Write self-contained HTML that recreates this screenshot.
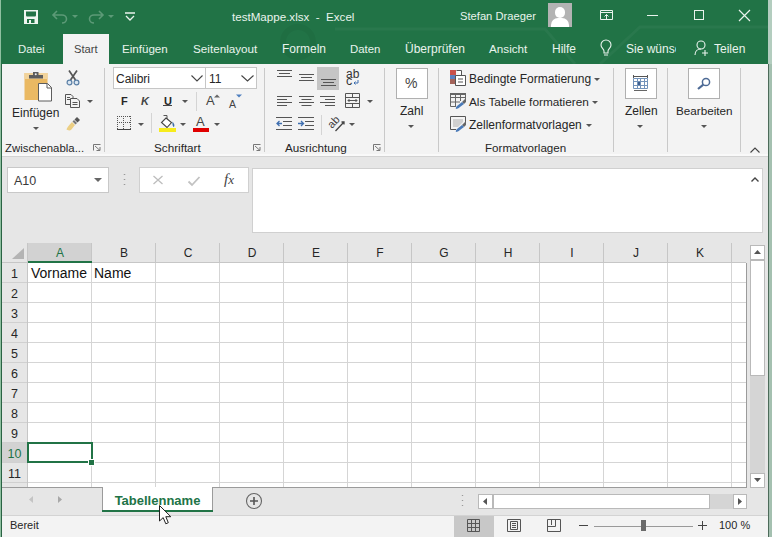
<!DOCTYPE html>
<html><head><meta charset="utf-8">
<style>
*{margin:0;padding:0;box-sizing:border-box}
html,body{width:772px;height:537px;overflow:hidden;background:#e6e6e6;font-family:"Liberation Sans",sans-serif;color:#262626}
.a{position:absolute;white-space:nowrap}
svg{position:absolute;overflow:visible}
#title{position:absolute;left:0;top:0;width:772px;height:64px;background:#217346}
.tt{position:absolute;white-space:nowrap;color:#e9f3ed;font-size:12px;line-height:14px}
.tab{position:absolute;white-space:nowrap;color:#e9f3ed;font-size:12px;line-height:14px;top:42px}
#ribbon{position:absolute;left:2px;top:64px;width:766px;height:90px;background:#f3f3f3}
.sep{position:absolute;top:4px;width:1px;height:84px;background:#c9c9c9}
.gl{position:absolute;top:141px;font-size:11px;line-height:13px;color:#262626;white-space:nowrap}
.rt{position:absolute;font-size:12px;line-height:14px;color:#262626;white-space:nowrap}
.hdr{position:absolute;top:243px;height:20px;background:#e6e6e6;border-right:1px solid #c6c6c6;border-bottom:1px solid #c6c6c6;font-size:12px;line-height:20px;text-align:center;color:#262626}
.rh{position:absolute;left:2px;width:26px;height:20px;background:#e6e6e6;border-right:1px solid #c6c6c6;border-bottom:1px solid #d0d0d0;font-size:12px;line-height:20px;text-align:center;color:#262626}
.vl{position:absolute;top:263px;width:1px;height:224px;background:#dadada}
.hl{position:absolute;left:27px;width:719px;height:1px;background:#dadada}
.arr{position:absolute;width:0;height:0;border-left:3px solid transparent;border-right:3px solid transparent;border-top:3px solid #555}
</style></head><body>
<div id="title">
  <svg style="left:0;top:0" width="772" height="64" viewBox="0 0 772 64"><circle cx="298" cy="42" r="15" fill="none" stroke="#000" stroke-opacity="0.045" stroke-width="6"/><path d="M335 29H545L575 64 M600 64L640 27H768" fill="none" stroke="#fff" stroke-opacity="0.04" stroke-width="3"/></svg>
  <!-- save -->
  <svg style="left:24px;top:10px" width="14" height="14" viewBox="0 0 14 14"><path d="M0 0H14V14H0Z M2 1.5V5C2 6 2.5 6.5 3.5 6.5H10.5C11.5 6.5 12 6 12 5V1.5Z M3 9V13H5V10H7V13H10.5V9Z" fill="#eef6f0" fill-rule="evenodd"/></svg>
  <!-- undo -->
  <svg style="left:52px;top:10px" width="16" height="13" viewBox="0 0 16 13"><path d="M5 1L1 5L5 9M1 5H10A4.5 4 0 0 1 10 13" fill="none" stroke="#5c9a77" stroke-width="1.6"/></svg>
  <div class="arr" style="left:72px;top:15px;border-top-color:#5c9a77"></div>
  <svg style="left:88px;top:10px" width="16" height="13" viewBox="0 0 16 13"><path d="M11 1L15 5L11 9M15 5H6A4.5 4 0 0 0 6 13" fill="none" stroke="#5c9a77" stroke-width="1.6"/></svg>
  <div class="arr" style="left:108px;top:15px;border-top-color:#5c9a77"></div>
  <svg style="left:125px;top:12px" width="11" height="9" viewBox="0 0 11 9"><path d="M0 1H10M1 4L5 8L9 4" fill="none" stroke="#e9f3ed" stroke-width="1.3"/></svg>
  <div class="tt" style="left:232px;top:10px;font-size:11.6px">testMappe.xlsx &nbsp;- &nbsp;Excel</div>
  <div class="tt" style="left:460px;top:9px;font-size:11.2px">Stefan Draeger</div>
  <div class="a" style="left:548px;top:3px;width:24px;height:24px;background:#b3b3b3;overflow:hidden">
    <div class="a" style="left:7px;top:4px;width:10px;height:11px;border-radius:5px;background:#fff"></div>
    <div class="a" style="left:3px;top:15px;width:18px;height:14px;border-radius:7px 7px 0 0;background:#fff"></div>
  </div>
  <svg style="left:600px;top:10px" width="14" height="10" viewBox="0 0 14 10"><path d="M0.5 0.5H12.5V9.5H0.5Z M0.5 2.5H12.5 M6.5 4.5V9 M4.5 6.5L6.5 4.5L8.5 6.5" fill="none" stroke="#e9f3ed" stroke-width="1"/></svg>
  <div class="a" style="left:647px;top:15px;width:11px;height:1px;background:#e9f3ed"></div>
  <div class="a" style="left:694px;top:10px;width:10px;height:10px;border:1px solid #e9f3ed"></div>
  <svg style="left:739px;top:10px" width="11" height="11" viewBox="0 0 11 11"><path d="M0 0L11 11M11 0L0 11" stroke="#e9f3ed" stroke-width="1.2"/></svg>

  <div class="tab" style="left:18px;font-size:11.4px">Datei</div>
  <div class="a" style="left:63px;top:34px;width:46px;height:30px;background:#f3f3f3"></div>
  <div class="tab" style="left:74px;color:#444;font-size:11.2px">Start</div>
  <div class="tab" style="left:122px;font-size:11.6px">Einfügen</div>
  <div class="tab" style="left:193px;font-size:11.7px">Seitenlayout</div>
  <div class="tab" style="left:282px">Formeln</div>
  <div class="tab" style="left:350px;font-size:11.4px">Daten</div>
  <div class="tab" style="left:405px">Überprüfen</div>
  <div class="tab" style="left:489px;font-size:11.7px">Ansicht</div>
  <div class="tab" style="left:552px">Hilfe</div>
  <svg style="left:600px;top:40px" width="12" height="17" viewBox="0 0 12 17"><path d="M4 13V11C4 9 1 8 1 5A5 5 0 0 1 11 5C11 8 8 9 8 11V13Z M4 15H8" fill="none" stroke="#e9f3ed" stroke-width="1.1"/></svg>
  <div class="tab" style="left:626px;width:50px;overflow:hidden">Sie wünsc</div>
  <svg style="left:694px;top:40px" width="16" height="16" viewBox="0 0 16 16"><circle cx="7" cy="5" r="4" fill="none" stroke="#e9f3ed" stroke-width="1.1"/><path d="M1 15C1 11 4 9 7 9 M11 10V16 M8 13H14" fill="none" stroke="#e9f3ed" stroke-width="1.1"/></svg>
  <div class="tab" style="left:714px">Teilen</div>
</div>
<div class="a" style="left:0;top:0;width:1px;height:537px;background:#8fc0a0"></div><div class="a" style="left:1px;top:64px;width:1px;height:473px;background:#2a6344"></div>
<div class="a" style="left:768px;top:64px;width:1px;height:473px;background:#4d6b5a"></div><div class="a" style="left:769px;top:64px;width:3px;height:473px;background:#a4c0b0"></div>
<div class="a" style="left:768px;top:0;width:4px;height:64px;background:#b3cdbf"></div>

<div id="ribbon">
  <div class="sep" style="left:102px;height:84px"></div>
  <div class="sep" style="left:262px"></div>
  <div class="sep" style="left:382px"></div>
  <div class="sep" style="left:436px"></div>
  <div class="sep" style="left:611px"></div>
  <div class="sep" style="left:665px"></div>
  <div class="sep" style="left:738px"></div>
</div>
<div class="a" style="left:2px;top:154px;width:766px;height:2px;background:#f9f9f9"></div><div class="a" style="left:2px;top:156px;width:766px;height:1px;background:#d3d3d3"></div>

<!-- Zwischenablage -->
<svg style="left:24px;top:72px" width="29" height="30" viewBox="0 0 29 30">
  <path d="M0.5 1H23.5V28H0.5Z" fill="#eab963"/>
  <path d="M0.5 1H23.5V7H0.5Z" fill="#f1d39b"/>
  <path d="M5 3H19V6.5H5Z" fill="#5d5d5d"/>
  <path d="M9 0H14.5V3.5H9Z" fill="#5d5d5d"/>
  <circle cx="11.75" cy="2.2" r="1" fill="#f3f3f3"/>
  <path d="M14.5 11.5H23.5L27.5 15.5V29H14.5Z" fill="#fff" stroke="#5d5d5d" stroke-width="1"/>
  <path d="M23 11.5V16H27.5" fill="none" stroke="#5d5d5d" stroke-width="1"/>
</svg>
<div class="rt" style="left:12px;top:106px;font-size:12px">Einfügen</div>
<div class="arr" style="left:33px;top:127px"></div>
<svg style="left:66px;top:70px" width="14" height="16" viewBox="0 0 14 16"><path d="M3 0.5L9.5 10 M11 0.5L4.5 10" stroke="#555" stroke-width="1.7" fill="none"/><circle cx="3.5" cy="12.5" r="2.4" fill="#dce8f3" stroke="#5a7fa6" stroke-width="1.2"/><circle cx="10.5" cy="12.5" r="2.4" fill="#dce8f3" stroke="#5a7fa6" stroke-width="1.2"/></svg>
<svg style="left:65px;top:94px" width="15" height="14" viewBox="0 0 15 14"><path d="M0.5 0.5H6L8 2.5V10.5H0.5Z M2 3.5H5 M2 5.5H5" fill="#f3f3f3" stroke="#555" stroke-width="1"/><path d="M5.5 4.5H12L14.5 7V13.5H5.5Z M7.5 8.5H12.5 M7.5 10.5H12.5" fill="#f3f3f3" stroke="#555" stroke-width="1"/></svg>
<div class="arr" style="left:87px;top:100px"></div>
<svg style="left:66px;top:117px" width="15" height="14" viewBox="0 0 15 14"><path d="M11 0L14 3L11.5 5.5L8.5 2.5Z" fill="#555"/><path d="M8 3L11 6L9.5 7.5L6.5 4.5Z" fill="#777"/><path d="M6 5L9 8L5 13C3.5 14 1 13 0.5 12.5C1 11 3 8 6 5Z" fill="#eccf84"/></svg>
<div class="gl" style="left:5px;font-size:11.4px;top:142px">Zwischenabla...</div>
<svg style="left:93px;top:144px" width="8" height="7" viewBox="0 0 8 7"><path d="M0.5 6.5V0.5H7.5 M2 2L7 6.5 M7 3V6.5H3.5" fill="none" stroke="#777" stroke-width="1"/></svg>

<!-- Schriftart -->
<div class="a" style="left:113px;top:67px;width:93px;height:22px;background:#fff;border:1px solid #c6c6c6"></div>
<div class="rt" style="left:116px;top:72px">Calibri</div>
<svg style="left:191px;top:75px" width="12" height="7" viewBox="0 0 12 7"><path d="M0.5 0.5L6 6L11.5 0.5" fill="none" stroke="#444" stroke-width="1.1"/></svg>
<div class="a" style="left:205px;top:67px;width:52px;height:22px;background:#fff;border:1px solid #c6c6c6"></div>
<div class="rt" style="left:209px;top:72px">11</div>
<svg style="left:241px;top:75px" width="13" height="7" viewBox="0 0 13 7"><path d="M0.5 0.5L6.5 6L12.5 0.5" fill="none" stroke="#444" stroke-width="1.1"/></svg>
<div class="rt" style="left:121px;top:94px;font-weight:bold;font-size:11px">F</div>
<div class="rt" style="left:141px;top:94px;font-weight:bold;font-style:italic;font-size:11px;color:#444">K</div>
<div class="rt" style="left:164px;top:94px;font-weight:bold;font-size:11px">U</div>
<div class="a" style="left:163px;top:105px;width:9px;height:1px;background:#444"></div>
<div class="arr" style="left:182px;top:100px"></div>
<div class="a" style="left:196px;top:92px;width:1px;height:19px;background:#d4d4d4"></div>
<div class="rt" style="left:206px;top:94px;font-size:13px;color:#444">A</div>
<svg style="left:214px;top:94px" width="6" height="4" viewBox="0 0 6 4"><path d="M0 3.5L3 0.5L6 3.5Z" fill="#666"/></svg>
<div class="rt" style="left:229px;top:97px;font-size:10.5px;color:#444">A</div>
<svg style="left:236px;top:94px" width="6" height="4" viewBox="0 0 6 4"><path d="M0 0.5L3 3.5L6 0.5Z" fill="#4e7fbf"/></svg>
<svg style="left:117px;top:116px" width="14" height="14" viewBox="0 0 14 14"><path d="M0.5 0V13 M13.5 0V13 M6.5 0V13 M0 0.5H14 M0 6.5H14" fill="none" stroke="#555" stroke-width="1" stroke-dasharray="1 1"/><path d="M0 13.5H14" stroke="#444" stroke-width="1"/></svg>
<div class="arr" style="left:138px;top:123px"></div>
<div class="a" style="left:151px;top:113px;width:1px;height:20px;background:#d4d4d4"></div>
<svg style="left:159px;top:115px" width="17" height="17" viewBox="0 0 17 17"><path d="M4.5 0.5H8V5" fill="none" stroke="#555" stroke-width="1"/><path d="M7 3L12.5 7.5L8 12.5L2.5 7.5Z" fill="#fff" stroke="#444" stroke-width="1.1"/><path d="M13.5 6.5C15 8.5 16 10 15 12C14 12 13 10 13.5 6.5Z" fill="#3d6ea8"/><path d="M0 13H17V17H0Z" fill="#f7ec1c"/></svg>
<div class="arr" style="left:180px;top:123px"></div>
<div class="rt" style="left:196px;top:115px;font-size:13px;color:#444">A</div>
<div class="a" style="left:193px;top:128px;width:16px;height:4px;background:#e00000"></div>
<div class="arr" style="left:214px;top:123px"></div>
<div class="gl" style="left:154px;font-size:11.7px">Schriftart</div>
<svg style="left:253px;top:144px" width="8" height="7" viewBox="0 0 8 7"><path d="M0.5 6.5V0.5H7.5 M2 2L7 6.5 M7 3V6.5H3.5" fill="none" stroke="#777" stroke-width="1"/></svg>

<!-- Ausrichtung -->
<svg style="left:277px;top:70px" width="15" height="8" viewBox="0 0 15 8"><path d="M0 0.5H15M2 3.5H13M0 6.5H15" stroke="#555" stroke-width="1"/></svg>
<svg style="left:299px;top:74px" width="15" height="8" viewBox="0 0 15 8"><path d="M0 0.5H15M2 3.5H13M0 6.5H15" stroke="#555" stroke-width="1"/></svg>
<div class="a" style="left:317px;top:67px;width:22px;height:23px;background:#c5c5c5"></div>
<svg style="left:321px;top:79px" width="15" height="8" viewBox="0 0 15 8"><path d="M0 0.5H15M2 3.5H13M0 6.5H15" stroke="#555" stroke-width="1"/></svg>
<div class="rt" style="left:346px;top:68px;font-size:12px;line-height:13px;color:#333">ab</div><div class="rt" style="left:346px;top:75px;font-size:12.5px;line-height:13px;color:#333">c</div>
<svg style="left:353px;top:80px" width="6" height="5" viewBox="0 0 6 5"><path d="M5 0V3H1M2.5 1.5L1 3L2.5 4.5" fill="none" stroke="#3f6fb0" stroke-width="1"/></svg>
<svg style="left:277px;top:96px" width="15" height="10" viewBox="0 0 15 10"><path d="M0 0.5H15M0 3.5H10M0 6.5H15M0 9.5H10" stroke="#555" stroke-width="1"/></svg>
<svg style="left:299px;top:96px" width="15" height="10" viewBox="0 0 15 10"><path d="M0 0.5H15M2.5 3.5H12.5M0 6.5H15M2.5 9.5H12.5" stroke="#555" stroke-width="1"/></svg>
<svg style="left:320px;top:96px" width="15" height="10" viewBox="0 0 15 10"><path d="M0 0.5H15M5 3.5H15M0 6.5H15M5 9.5H15" stroke="#555" stroke-width="1"/></svg>
<svg style="left:345px;top:93px" width="15" height="15" viewBox="0 0 15 15"><path d="M0.5 0.5H14.5V14.5H0.5Z M0.5 4.5H14.5 M0.5 10.5H14.5 M7.5 0.5V4.5 M7.5 10.5V14.5 M3 7.5H12 M4.5 6L3 7.5L4.5 9 M10.5 6L12 7.5L10.5 9" fill="none" stroke="#555" stroke-width="1"/></svg>
<div class="arr" style="left:367px;top:100px"></div>
<svg style="left:276px;top:117px" width="16" height="13" viewBox="0 0 16 13"><path d="M0 0.5H16M7 4.5H16M7 8.5H16M0 12.5H16" stroke="#555" stroke-width="1"/><path d="M1 6.5H6M3.5 4L1 6.5L3.5 9" fill="none" stroke="#3f6fb0" stroke-width="1.3"/></svg>
<svg style="left:298px;top:117px" width="16" height="13" viewBox="0 0 16 13"><path d="M0 0.5H16M7 4.5H16M7 8.5H16M0 12.5H16" stroke="#555" stroke-width="1"/><path d="M0 6.5H5.5M3 4L5.5 6.5L3 9" fill="none" stroke="#3f6fb0" stroke-width="1.3"/></svg>
<div class="a" style="left:321px;top:115px;width:1px;height:20px;background:#d4d4d4"></div>
<svg style="left:326px;top:114px" width="22" height="20" viewBox="0 0 22 20"><text x="0" y="0" font-size="11" font-family="Liberation Sans" fill="#3c3c3c" transform="translate(6,15) rotate(-47)">ab</text><path d="M9.5 17L17.5 8.5M15.5 8H18V10.5" fill="none" stroke="#444" stroke-width="1.3"/></svg>
<div class="arr" style="left:349px;top:123px"></div>
<div class="gl" style="left:285px;font-size:11.7px">Ausrichtung</div>
<svg style="left:373px;top:144px" width="8" height="7" viewBox="0 0 8 7"><path d="M0.5 6.5V0.5H7.5 M2 2L7 6.5 M7 3V6.5H3.5" fill="none" stroke="#777" stroke-width="1"/></svg>

<!-- Zahl -->
<div class="a" style="left:396px;top:68px;width:32px;height:31px;background:#fff;border:1px solid #b0b0b0"></div>
<div class="rt" style="left:405px;top:76px;font-size:14px;color:#444">%</div>
<div class="rt" style="left:400px;top:104px">Zahl</div>
<div class="arr" style="left:408px;top:125px"></div>

<!-- Formatvorlagen -->
<svg style="left:450px;top:70px" width="16" height="16" viewBox="0 0 16 16"><path d="M0 0H6V5H0Z" fill="#c9504a"/><path d="M0 5H6V9H0Z" fill="#5b7fbf"/><path d="M0 9H6V14H0Z" fill="#a4645a"/><path d="M6.5 0.5H11.5V5.5 M5.5 5.5H15.5V15.5H5.5Z M8 9H13M8 12H13" fill="#fff" stroke="#555" stroke-width="1"/></svg>
<div class="rt" style="left:469px;top:72px">Bedingte Formatierung</div>
<div class="arr" style="left:594px;top:78px"></div>
<svg style="left:450px;top:93px" width="16" height="16" viewBox="0 0 16 16"><path d="M0.5 0.5H15.5V6 M0.5 0.5V13.5H6 M0.5 4.5H15.5 M5.5 0.5V13.5 M10.5 0.5V8 M0.5 9H10" fill="none" stroke="#666" stroke-width="1"/><path d="M0 0H16V2H0Z" fill="#666"/><path d="M16 5L12 9L14 11L16 9Z" fill="#666"/><path d="M12 9L7 13C6 14 5.5 15.5 6 16C7 16 9 15 10 14L14 11Z" fill="#4a7ab8"/></svg>
<div class="rt" style="left:469px;top:95px;font-size:11.8px">Als Tabelle formatieren</div>
<div class="arr" style="left:592px;top:101px"></div>
<svg style="left:450px;top:116px" width="16" height="16" viewBox="0 0 16 16"><path d="M0.5 0.5H15.5V6 M0.5 0.5V13.5H6" fill="none" stroke="#555" stroke-width="1"/><path d="M3 3H13V6L8 11H3Z" fill="#d0d0d0"/><path d="M16 5L12 9L14 11L16 9Z" fill="#666"/><path d="M12 9L7 13C6 14 5.5 15.5 6 16C7 16 9 15 10 14L14 11Z" fill="#4a7ab8"/></svg>
<div class="rt" style="left:469px;top:118px">Zellenformatvorlagen</div>
<div class="arr" style="left:586px;top:124px"></div>
<div class="gl" style="left:485px;font-size:11.6px">Formatvorlagen</div>

<!-- Zellen -->
<div class="a" style="left:625px;top:68px;width:32px;height:31px;background:#fff;border:1px solid #b0b0b0"></div>
<svg style="left:633px;top:75px" width="15" height="16" viewBox="0 0 15 16"><path d="M0.5 0V3 M14.5 0V3 M0.5 1.5H14.5" stroke="#555" stroke-width="1"/><path d="M4.5 6.5H7.5V10.5H4.5Z" fill="#3d5f90"/><path d="M0.5 3.5H14.5V13.5H0.5Z M0.5 6.5H14.5 M0.5 10.5H14.5 M4.5 3.5V13.5 M7.5 3.5V13.5 M11.5 3.5V13.5" fill="none" stroke="#7393bb" stroke-width="1"/><path d="M1 15.5H14" stroke="#666" stroke-width="1"/></svg>
<div class="rt" style="left:625px;top:104px">Zellen</div>
<div class="arr" style="left:637px;top:125px"></div>

<!-- Bearbeiten -->
<div class="a" style="left:688px;top:68px;width:32px;height:31px;background:#fff;border:1px solid #b0b0b0"></div>
<svg style="left:697px;top:77px" width="14" height="12" viewBox="0 0 14 12"><circle cx="9" cy="5" r="3.6" fill="none" stroke="#4d6a95" stroke-width="1.5"/><path d="M6.3 7.7L1 12" stroke="#4d6a95" stroke-width="2.2"/></svg>
<div class="rt" style="left:676px;top:104px;font-size:11.7px">Bearbeiten</div>
<div class="arr" style="left:701px;top:125px"></div>
<svg style="left:750px;top:147px" width="10" height="6" viewBox="0 0 10 6"><path d="M0.5 5.5L5 1L9.5 5.5" fill="none" stroke="#444" stroke-width="1.1"/></svg>

<!-- formula bar -->
<div class="a" style="left:7px;top:167px;width:102px;height:26px;background:#fff;border:1px solid #c8c8c8"></div>
<div class="rt" style="left:14px;top:174px;font-size:12.5px;color:#3a3a3a">A10</div>
<div class="arr" style="left:94px;top:178px;border-width:4px 4px 0 4px;border-top-color:#666"></div>
<svg style="left:123px;top:173px" width="3" height="14" viewBox="0 0 3 14"><path d="M1.5 1V2M1.5 6V7M1.5 11V12" stroke="#999" stroke-width="1.5"/></svg>
<div class="a" style="left:139px;top:167px;width:110px;height:26px;background:#fff;border:1px solid #d0d0d0"></div>
<svg style="left:153px;top:176px" width="10" height="8" viewBox="0 0 10 8"><path d="M0.5 0L9.5 8M9.5 0L0.5 8" stroke="#bdbdbd" stroke-width="1.3"/></svg>
<svg style="left:188px;top:176px" width="12" height="10" viewBox="0 0 12 10"><path d="M0.5 5.5L4 9L11.5 1" fill="none" stroke="#c2c2c2" stroke-width="1.8"/></svg>
<div class="rt" style="left:224px;top:172px;font-family:'Liberation Serif',serif;font-style:italic;font-size:15px;color:#444;letter-spacing:0px">f<span style="font-size:13px">x</span></div>
<div class="a" style="left:252px;top:168px;width:511px;height:65px;background:#fff;border:1px solid #d0d0d0"></div>
<svg style="left:751px;top:177px" width="8" height="5" viewBox="0 0 8 5"><path d="M0.5 4.5L4 1L7.5 4.5" fill="none" stroke="#444" stroke-width="1.4"/></svg>

<!-- grid -->
<div class="a" style="left:27px;top:263px;width:719px;height:224px;background:#fff"></div>
<div class="a" style="left:2px;top:243px;width:744px;height:20px;background:#e6e6e6"></div>
<svg style="left:12px;top:248px" width="12" height="11" viewBox="0 0 12 11"><path d="M12 0V11H0Z" fill="#b4b4b4"/></svg>
<div class="a" style="left:28px;top:243px;width:64px;height:19px;background:#d2d2d2"></div>
<div class="a" style="left:27px;top:261px;width:65px;height:2px;background:#217346"></div>
<div class="a" style="left:91px;top:243px;width:1px;height:20px;background:#c6c6c6"></div>
<div class="a" style="left:28px;top:246px;width:64px;text-align:center;font-size:12px;line-height:14px;color:#217346">A</div>
<div class="a" style="left:155px;top:243px;width:1px;height:20px;background:#c6c6c6"></div>
<div class="a" style="left:92px;top:246px;width:64px;text-align:center;font-size:12px;line-height:14px;color:#262626">B</div>
<div class="a" style="left:219px;top:243px;width:1px;height:20px;background:#c6c6c6"></div>
<div class="a" style="left:156px;top:246px;width:64px;text-align:center;font-size:12px;line-height:14px;color:#262626">C</div>
<div class="a" style="left:283px;top:243px;width:1px;height:20px;background:#c6c6c6"></div>
<div class="a" style="left:220px;top:246px;width:64px;text-align:center;font-size:12px;line-height:14px;color:#262626">D</div>
<div class="a" style="left:347px;top:243px;width:1px;height:20px;background:#c6c6c6"></div>
<div class="a" style="left:284px;top:246px;width:64px;text-align:center;font-size:12px;line-height:14px;color:#262626">E</div>
<div class="a" style="left:411px;top:243px;width:1px;height:20px;background:#c6c6c6"></div>
<div class="a" style="left:348px;top:246px;width:64px;text-align:center;font-size:12px;line-height:14px;color:#262626">F</div>
<div class="a" style="left:475px;top:243px;width:1px;height:20px;background:#c6c6c6"></div>
<div class="a" style="left:412px;top:246px;width:64px;text-align:center;font-size:12px;line-height:14px;color:#262626">G</div>
<div class="a" style="left:539px;top:243px;width:1px;height:20px;background:#c6c6c6"></div>
<div class="a" style="left:476px;top:246px;width:64px;text-align:center;font-size:12px;line-height:14px;color:#262626">H</div>
<div class="a" style="left:603px;top:243px;width:1px;height:20px;background:#c6c6c6"></div>
<div class="a" style="left:540px;top:246px;width:64px;text-align:center;font-size:12px;line-height:14px;color:#262626">I</div>
<div class="a" style="left:667px;top:243px;width:1px;height:20px;background:#c6c6c6"></div>
<div class="a" style="left:604px;top:246px;width:64px;text-align:center;font-size:12px;line-height:14px;color:#262626">J</div>
<div class="a" style="left:731px;top:243px;width:1px;height:20px;background:#c6c6c6"></div>
<div class="a" style="left:668px;top:246px;width:64px;text-align:center;font-size:12px;line-height:14px;color:#262626">K</div>
<div class="a" style="left:2px;top:262px;width:744px;height:1px;background:#c6c6c6"></div>
<div class="a" style="left:27px;top:261px;width:65px;height:2px;background:#217346"></div>
<div class="a" style="left:2px;top:263px;width:25px;height:20px;background:#e6e6e6;overflow:hidden"></div>
<div class="a" style="left:2px;top:267px;width:25px;text-align:center;font-size:12.5px;line-height:14px;color:#262626">1</div>
<div class="a" style="left:2px;top:282px;width:25px;height:1px;background:#d0d0d0"></div>
<div class="a" style="left:2px;top:283px;width:25px;height:20px;background:#e6e6e6;overflow:hidden"></div>
<div class="a" style="left:2px;top:287px;width:25px;text-align:center;font-size:12.5px;line-height:14px;color:#262626">2</div>
<div class="a" style="left:2px;top:302px;width:25px;height:1px;background:#d0d0d0"></div>
<div class="a" style="left:2px;top:303px;width:25px;height:20px;background:#e6e6e6;overflow:hidden"></div>
<div class="a" style="left:2px;top:307px;width:25px;text-align:center;font-size:12.5px;line-height:14px;color:#262626">3</div>
<div class="a" style="left:2px;top:322px;width:25px;height:1px;background:#d0d0d0"></div>
<div class="a" style="left:2px;top:323px;width:25px;height:20px;background:#e6e6e6;overflow:hidden"></div>
<div class="a" style="left:2px;top:327px;width:25px;text-align:center;font-size:12.5px;line-height:14px;color:#262626">4</div>
<div class="a" style="left:2px;top:342px;width:25px;height:1px;background:#d0d0d0"></div>
<div class="a" style="left:2px;top:343px;width:25px;height:20px;background:#e6e6e6;overflow:hidden"></div>
<div class="a" style="left:2px;top:347px;width:25px;text-align:center;font-size:12.5px;line-height:14px;color:#262626">5</div>
<div class="a" style="left:2px;top:362px;width:25px;height:1px;background:#d0d0d0"></div>
<div class="a" style="left:2px;top:363px;width:25px;height:20px;background:#e6e6e6;overflow:hidden"></div>
<div class="a" style="left:2px;top:367px;width:25px;text-align:center;font-size:12.5px;line-height:14px;color:#262626">6</div>
<div class="a" style="left:2px;top:382px;width:25px;height:1px;background:#d0d0d0"></div>
<div class="a" style="left:2px;top:383px;width:25px;height:20px;background:#e6e6e6;overflow:hidden"></div>
<div class="a" style="left:2px;top:387px;width:25px;text-align:center;font-size:12.5px;line-height:14px;color:#262626">7</div>
<div class="a" style="left:2px;top:402px;width:25px;height:1px;background:#d0d0d0"></div>
<div class="a" style="left:2px;top:403px;width:25px;height:20px;background:#e6e6e6;overflow:hidden"></div>
<div class="a" style="left:2px;top:407px;width:25px;text-align:center;font-size:12.5px;line-height:14px;color:#262626">8</div>
<div class="a" style="left:2px;top:422px;width:25px;height:1px;background:#d0d0d0"></div>
<div class="a" style="left:2px;top:423px;width:25px;height:20px;background:#e6e6e6;overflow:hidden"></div>
<div class="a" style="left:2px;top:427px;width:25px;text-align:center;font-size:12.5px;line-height:14px;color:#262626">9</div>
<div class="a" style="left:2px;top:442px;width:25px;height:1px;background:#d0d0d0"></div>
<div class="a" style="left:2px;top:443px;width:25px;height:20px;background:#d2d2d2;overflow:hidden"></div>
<div class="a" style="left:2px;top:447px;width:25px;text-align:center;font-size:12.5px;line-height:14px;color:#217346">10</div>
<div class="a" style="left:2px;top:462px;width:25px;height:1px;background:#d0d0d0"></div>
<div class="a" style="left:2px;top:463px;width:25px;height:20px;background:#e6e6e6;overflow:hidden"></div>
<div class="a" style="left:2px;top:467px;width:25px;text-align:center;font-size:12.5px;line-height:14px;color:#262626">11</div>
<div class="a" style="left:2px;top:482px;width:25px;height:1px;background:#d0d0d0"></div>
<div class="a" style="left:2px;top:483px;width:25px;height:4px;background:#e6e6e6;overflow:hidden"></div>
<div class="a" style="left:27px;top:243px;width:1px;height:244px;background:#c6c6c6"></div>
<div class="a" style="left:91px;top:263px;width:1px;height:224px;background:#d5d5d5"></div>
<div class="a" style="left:155px;top:263px;width:1px;height:224px;background:#d5d5d5"></div>
<div class="a" style="left:219px;top:263px;width:1px;height:224px;background:#d5d5d5"></div>
<div class="a" style="left:283px;top:263px;width:1px;height:224px;background:#d5d5d5"></div>
<div class="a" style="left:347px;top:263px;width:1px;height:224px;background:#d5d5d5"></div>
<div class="a" style="left:411px;top:263px;width:1px;height:224px;background:#d5d5d5"></div>
<div class="a" style="left:475px;top:263px;width:1px;height:224px;background:#d5d5d5"></div>
<div class="a" style="left:539px;top:263px;width:1px;height:224px;background:#d5d5d5"></div>
<div class="a" style="left:603px;top:263px;width:1px;height:224px;background:#d5d5d5"></div>
<div class="a" style="left:667px;top:263px;width:1px;height:224px;background:#d5d5d5"></div>
<div class="a" style="left:731px;top:263px;width:1px;height:224px;background:#d5d5d5"></div>
<div class="a" style="left:28px;top:282px;width:718px;height:1px;background:#d5d5d5"></div>
<div class="a" style="left:28px;top:302px;width:718px;height:1px;background:#d5d5d5"></div>
<div class="a" style="left:28px;top:322px;width:718px;height:1px;background:#d5d5d5"></div>
<div class="a" style="left:28px;top:342px;width:718px;height:1px;background:#d5d5d5"></div>
<div class="a" style="left:28px;top:362px;width:718px;height:1px;background:#d5d5d5"></div>
<div class="a" style="left:28px;top:382px;width:718px;height:1px;background:#d5d5d5"></div>
<div class="a" style="left:28px;top:402px;width:718px;height:1px;background:#d5d5d5"></div>
<div class="a" style="left:28px;top:422px;width:718px;height:1px;background:#d5d5d5"></div>
<div class="a" style="left:28px;top:442px;width:718px;height:1px;background:#d5d5d5"></div>
<div class="a" style="left:28px;top:462px;width:718px;height:1px;background:#d5d5d5"></div>
<div class="a" style="left:28px;top:482px;width:718px;height:1px;background:#d5d5d5"></div>
<div class="a" style="left:746px;top:263px;width:1px;height:225px;background:#9b9b9b"></div>
<div class="a" style="left:2px;top:487px;width:745px;height:1px;background:#9b9b9b"></div>
<div class="a" style="left:31px;top:266px;font-size:14px;line-height:15px;color:#111">Vorname</div>
<div class="a" style="left:94px;top:266px;font-size:14px;line-height:15px;color:#111">Name</div>
<div class="a" style="left:27px;top:442px;width:66px;height:21px;border:2px solid #217346"></div>
<div class="a" style="left:88px;top:459px;width:7px;height:7px;background:#217346;border:1px solid #fff"></div>
<!-- /grid -->
<!-- scrollbars -->
<div class="a" style="left:750px;top:245px;width:15px;height:15px;background:#fff;border:1px solid #b9b9b9"></div>
<svg style="left:754px;top:250px" width="7" height="4" viewBox="0 0 7 4"><path d="M0 4L3.5 0L7 4Z" fill="#555"/></svg>
<div class="a" style="left:750px;top:260px;width:15px;height:213px;background:#d5d5d5"></div>
<div class="a" style="left:750px;top:260px;width:15px;height:116px;background:#fff;border:1px solid #b9b9b9"></div>
<div class="a" style="left:750px;top:473px;width:15px;height:15px;background:#fff;border:1px solid #b9b9b9"></div>
<svg style="left:754px;top:478px" width="7" height="4" viewBox="0 0 7 4"><path d="M0 0L3.5 4L7 0Z" fill="#555"/></svg>
<!-- sheet tabs -->
<svg style="left:29px;top:496px" width="4" height="7" viewBox="0 0 4 7"><path d="M4 0L0 3.5L4 7Z" fill="#c4c4c4"/></svg>
<svg style="left:58px;top:496px" width="4" height="7" viewBox="0 0 4 7"><path d="M0 0L4 3.5L0 7Z" fill="#a8a8a8"/></svg>
<div class="a" style="left:102px;top:487px;width:111px;height:25px;background:#fff;border-left:1px solid #9b9b9b;border-right:1px solid #9b9b9b"></div>
<div class="a" style="left:102px;top:510px;width:111px;height:2px;background:#217346"></div>
<div class="a" style="left:102px;top:493px;width:111px;text-align:center;font-size:13px;line-height:15px;font-weight:bold;color:#217346">Tabellenname</div>
<svg style="left:245px;top:492px" width="18" height="18" viewBox="0 0 18 18"><circle cx="9" cy="9" r="7.5" fill="none" stroke="#666" stroke-width="1.1"/><path d="M9 5V13M5 9H13" stroke="#555" stroke-width="1.6"/></svg>
<svg style="left:461px;top:494px" width="3" height="14" viewBox="0 0 3 14"><path d="M1.5 1V2M1.5 6V7M1.5 11V12" stroke="#999" stroke-width="1.3"/></svg>
<div class="a" style="left:478px;top:494px;width:15px;height:15px;background:#fff;border:1px solid #b9b9b9"></div>
<svg style="left:483px;top:498px" width="4" height="7" viewBox="0 0 4 7"><path d="M4 0L0 3.5L4 7Z" fill="#555"/></svg>
<div class="a" style="left:493px;top:494px;width:217px;height:15px;background:#fff;border:1px solid #b9b9b9"></div>
<div class="a" style="left:710px;top:494px;width:23px;height:15px;background:#d5d5d5"></div>
<div class="a" style="left:733px;top:494px;width:14px;height:15px;background:#fff;border:1px solid #b9b9b9"></div>
<svg style="left:738px;top:498px" width="4" height="7" viewBox="0 0 4 7"><path d="M0 0L4 3.5L0 7Z" fill="#555"/></svg>
<!-- cursor -->

<!-- status bar -->
<div class="a" style="left:2px;top:515px;width:766px;height:1px;background:#d3d3d3"></div>
<div class="a" style="left:2px;top:516px;width:766px;height:21px;background:#f3f3f3"></div>
<div class="rt" style="left:10px;top:518px;font-size:11px">Bereit</div>
<div class="a" style="left:454px;top:516px;width:40px;height:21px;background:#c8c8c8"></div>
<svg style="left:467px;top:519px" width="13" height="13" viewBox="0 0 13 13"><path d="M0.5 0.5H12.5V12.5H0.5Z M4.5 0.5V12.5 M8.5 0.5V12.5 M0.5 4.5H12.5 M0.5 8.5H12.5" fill="none" stroke="#555" stroke-width="1"/></svg>
<svg style="left:507px;top:519px" width="14" height="13" viewBox="0 0 14 13"><path d="M0.5 0.5H13.5V12.5H0.5Z M3.5 2.5H10.5V10.5H3.5Z M5 4.5H9M5 6.5H9M5 8.5H9" fill="none" stroke="#555" stroke-width="1"/></svg>
<svg style="left:547px;top:519px" width="14" height="13" viewBox="0 0 14 13"><path d="M0.5 0.5H13.5V12.5H0.5Z M0.5 7.5H8.5V0.5 M4.5 0.5V6" fill="none" stroke="#555" stroke-width="1"/></svg>
<div class="a" style="left:579px;top:525px;width:9px;height:1px;background:#444"></div>
<div class="a" style="left:594px;top:526px;width:99px;height:1px;background:#999"></div>
<div class="a" style="left:641px;top:520px;width:5px;height:11px;background:#6a6a6a"></div>
<div class="a" style="left:698px;top:525px;width:9px;height:1px;background:#444"></div>
<div class="a" style="left:702px;top:521px;width:1px;height:9px;background:#444"></div>
<div class="rt" style="left:719px;top:518px;font-size:11px">100 %</div>

<svg style="left:159px;top:505px" width="13" height="20" viewBox="0 0 13 20"><path d="M0.5 0.5V16L4.2 12.6L6.8 18.8L9.3 17.7L6.8 11.7H11.8Z" fill="#fff" stroke="#222" stroke-width="1" stroke-linejoin="round"/></svg>
</body></html>
